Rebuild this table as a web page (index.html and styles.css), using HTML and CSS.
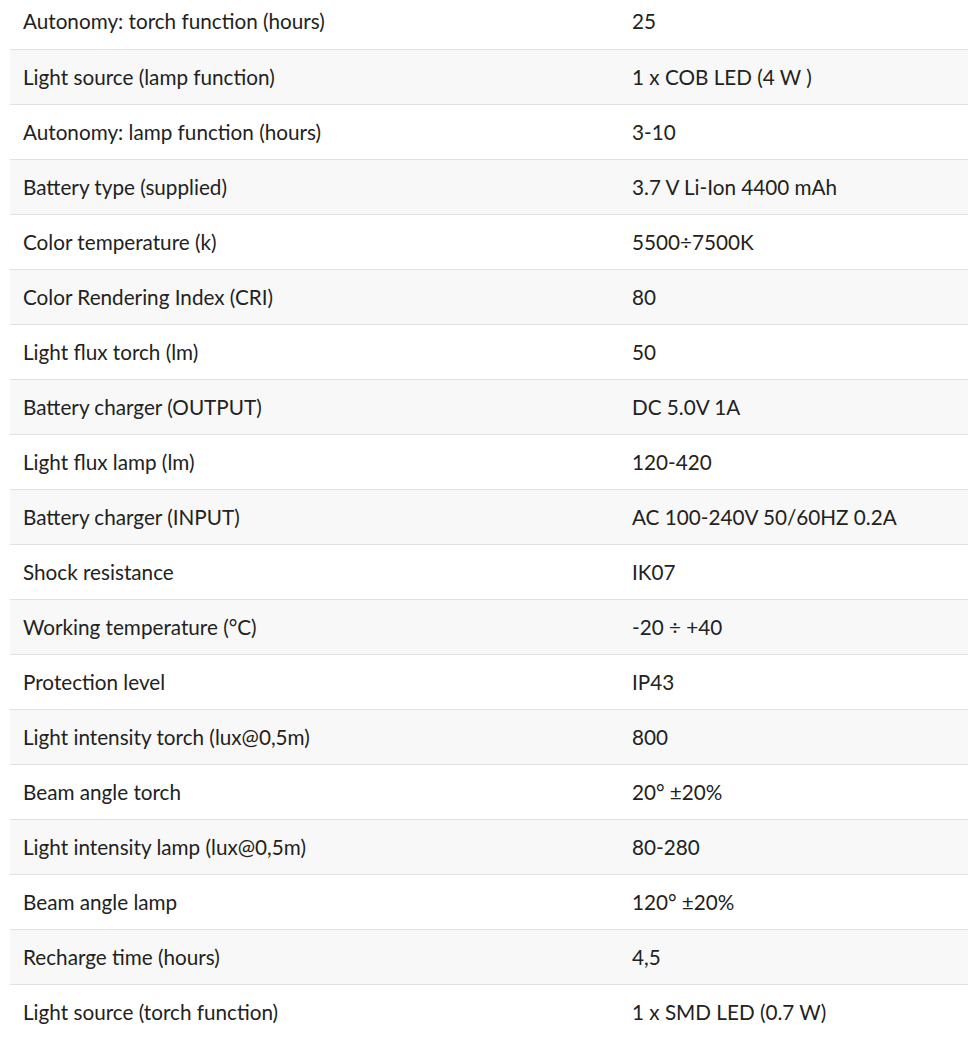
FILE: index.html
```html
<!DOCTYPE html>
<html>
<head>
<meta charset="utf-8">
<link rel="stylesheet" href="styles.css">
</head>
<body>
<table class="specs">
<tbody>
<tr><td>Autonomy: torch function (hours)</td><td>25</td></tr>
<tr><td>Light source (lamp function)</td><td>1 x COB LED (4 W )</td></tr>
<tr><td>Autonomy: lamp function (hours)</td><td>3-10</td></tr>
<tr><td>Battery type (supplied)</td><td>3.7 V Li-Ion 4400 mAh</td></tr>
<tr><td>Color temperature (k)</td><td>5500÷7500K</td></tr>
<tr><td>Color Rendering Index (CRI)</td><td>80</td></tr>
<tr><td>Light flux torch (lm)</td><td>50</td></tr>
<tr><td>Battery charger (OUTPUT)</td><td>DC 5.0V 1A</td></tr>
<tr><td>Light flux lamp (lm)</td><td>120-420</td></tr>
<tr><td>Battery charger (INPUT)</td><td>AC 100-240V 50/60HZ 0.2A</td></tr>
<tr><td>Shock resistance</td><td>IK07</td></tr>
<tr><td>Working temperature (°C)</td><td>-20 ÷ +40</td></tr>
<tr><td>Protection level</td><td>IP43</td></tr>
<tr><td>Light intensity torch (lux@0,5m)</td><td>800</td></tr>
<tr><td>Beam angle torch</td><td>20° ±20%</td></tr>
<tr><td>Light intensity lamp (lux@0,5m)</td><td>80-280</td></tr>
<tr><td>Beam angle lamp</td><td>120° ±20%</td></tr>
<tr><td>Recharge time (hours)</td><td>4,5</td></tr>
<tr><td>Light source (torch function)</td><td>1 x SMD LED (0.7 W)</td></tr>
</tbody>
</table>
</body>
</html>
```
FILE: styles.css
```css
html, body {
  margin: 0;
  padding: 0;
  background: #fff;
  overflow: hidden;
}
.specs {
  margin: -6px 0 0 10px;
  width: 970px;
  border-collapse: collapse;
  font-family: Lato, "Liberation Sans", sans-serif;
  font-size: 20.7px;
  color: #222;
}
.specs tr {
  height: 55px;
  border-bottom: 1px solid #e1e1e1;
}
.specs tr:last-child {
  border-bottom: none;
}
.specs tr:nth-child(even) {
  background: #f8f8f8;
}
.specs td {
  padding: 0 13px;
  vertical-align: middle;
  line-height: 24px;
}
.specs td:first-child {
  width: 583px;
}
```
